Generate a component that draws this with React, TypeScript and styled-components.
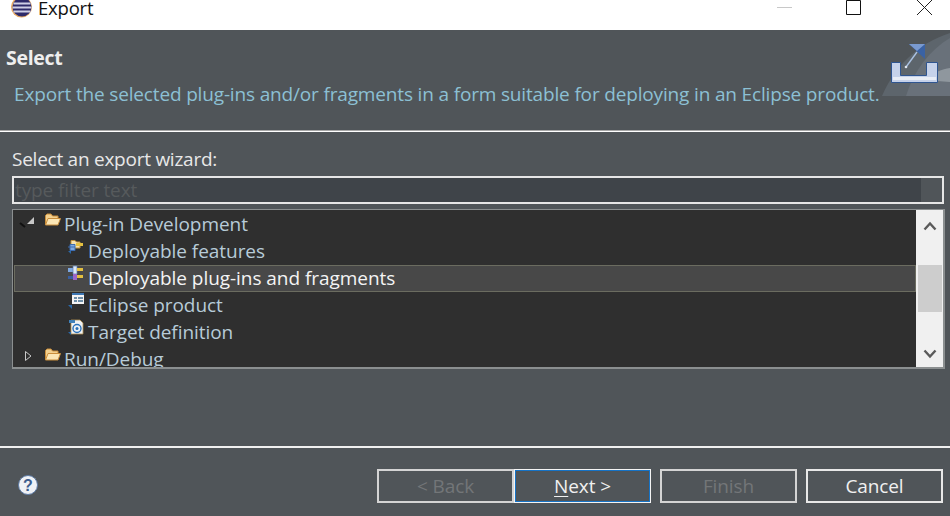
import React from "react";
import styled, { createGlobalStyle } from "styled-components";

const Global = createGlobalStyle`
  html, body { margin: 0; padding: 0; background: #505559; }
  #root { width: 950px; height: 516px; overflow: hidden; }
  * { box-sizing: border-box; }
`;
const FONT = `"Open Sans", "Noto Sans", "Liberation Sans", sans-serif`;

const Dialog = styled.div`
  width: 950px; height: 516px; display: flex; flex-direction: column;
  background: #505559; font-family: ${FONT}; overflow: hidden;
`;
const TitleBar = styled.div`
  height: 30px; flex: none; background: #fff; display: flex; align-items: flex-start;
  padding-left: 11px; position: relative;
`;
const TitleText = styled.span`
  font-size: 18.5px; line-height: 15px; margin-left: 5px; color: #111; letter-spacing: -0.2px;
`;
const WindowButtons = styled.div`
  margin-left: auto; display: flex; align-items: flex-start; height: 16px;
`;
const WinIcon = styled.svg<{ $mr: number; $mt?: number }>`
  display: block; flex: none; margin-right: ${(p) => p.$mr}px; margin-top: ${(p) => p.$mt ?? 0}px;
`;
const Banner = styled.div`
  height: 102px; flex: none; padding: 17px 0 0 6px; position: relative;
  border-bottom: 1px solid #fff; box-shadow: inset 0 -1px 0 #a8a8a8;
`;
const BannerTitle = styled.div`
  font-size: 19.5px; line-height: 22px; font-weight: 700; color: #eee; letter-spacing: -0.3px;
`;
const BannerText = styled.div`
  font-size: 19px; line-height: 26px; color: #8cc0d4; margin: 12px 0 0 8px; white-space: nowrap;
  letter-spacing: -0.16px;
`;
const BannerArt = styled.svg`
  position: absolute; right: 0; top: 0;
`;
const Main = styled.div`
  flex: 1; display: flex; flex-direction: column; padding: 13px 5px 0 12px;
`;
const Label = styled.div`
  font-size: 19px; line-height: 28px; height: 31px; color: #e8e8e8; letter-spacing: -0.25px;
`;
const FilterBox = styled.div`
  height: 28px; width: 932px; border: 2px solid #e6e6e6; background: #505559; padding-right: 21px; flex: none;
`;
const FilterField = styled.div`
  height: 100%; background: #3f4449; color: #565a5c; font-size: 19px; line-height: 24px; padding-left: 1px;
  letter-spacing: -0.1px; overflow: hidden;
`;
const Tree = styled.div`
  margin-top: 5px; height: 160px; width: 933px; flex: none; display: flex;
  border: 1px solid #8b8f90; border-right-width: 2px; border-bottom-width: 2px; background: #2f2f2f; overflow: hidden;
`;
const Rows = styled.div`
  flex: 1; min-width: 0; padding: 1px 0 0 1px; overflow: hidden;
`;
const Row = styled.div<{ $depth: number; $selected?: boolean }>`
  height: 27px; display: flex; align-items: center; position: relative;
  padding: 0 0 2px ${(p) => (p.$depth === 0 ? 5 : 53)}px;
  color: ${(p) => (p.$selected ? "#f4f4f4" : "#b7cbd8")};
  background: ${(p) => (p.$selected ? "#484848" : "transparent")};
  box-shadow: ${(p) => (p.$selected ? "inset 0 0 0 1px #6b6c60" : "none")};
  font-size: 19px; letter-spacing: -0.05px; white-space: nowrap;
`;
const Twist = styled.svg`
  flex: none; margin-right: 5px; margin-top: -5px;
`;
const RowIcon = styled.svg<{ $mr?: number }>`
  flex: none; margin-right: ${(p) => p.$mr ?? 3}px; margin-top: -8px;
`;
const Scrollbar = styled.div`
  width: 27px; flex: none; background: #f0f0f0; display: flex; flex-direction: column; align-items: center;
  padding: 11px 0 0;
`;
const Thumb = styled.div`
  width: 24px; height: 47px; background: #cdcdcd; margin-top: 34px; margin-bottom: 37px; flex: none;
`;
const Footer = styled.div`
  flex: none; height: 70px; border-top: 2px solid #f0f0f0; display: flex; align-items: flex-start;
  padding: 21px 7px 0 18px;
`;
const Help = styled.svg`
  flex: none; margin-top: 6px;
`;
const Buttons = styled.div`
  margin-left: auto; display: flex;
`;
const Button = styled.div<{ $disabled?: boolean; $primary?: boolean; $gap?: number }>`
  width: 137px; height: 34px; display: flex; align-items: center; justify-content: center;
  padding-bottom: 1px;
  margin-left: ${(p) => p.$gap ?? 0}px;
  border: ${(p) => (p.$primary ? "1px solid #f4f4f4" : `2px solid ${p.$disabled ? "#d4d4d4" : "#e8e8e8"}`)};
  box-shadow: ${(p) => (p.$primary ? "inset 0 0 0 1px #1673c6" : "none")};
  color: ${(p) => (p.$disabled ? "#737678" : "#f0f0f0")};
  font-size: 19px; letter-spacing: -0.1px;
`;
const Mnemonic = styled.span`
  text-decoration: underline; text-underline-offset: 3px;
`;

const EclipseIcon = () => (
  <svg width="22" height="18" viewBox="0 0 22 18" style={{ display: "block", flex: "none" }}>
    <circle cx="10.500" cy="7" r="10.500" fill="#e6a860" />
    <circle cx="11" cy="7" r="9.500" fill="#2e2a6a" />
    <path d="M2.500 3.500h17M1.500 7.500h19M2.500 11.500h17" stroke="#cfcfe6" strokeWidth="1.800" />
  </svg>
);

const Folder = () => (
  <RowIcon $mr={2} width="18" height="16" viewBox="0 0 18 16">
    <path d="M1.500 13V3.500L3 2h4l1.500 2H14v2" fill="#f3d08e" stroke="#c98d3a" />
    <path d="M1.500 13 4 6.500h12.500L14 13z" fill="#fbe6b5" stroke="#c98d3a" />
  </RowIcon>
);
const Feature = () => (
  <RowIcon width="18" height="18" viewBox="0 0 18 18">
    <path d="M4 7V2.500h4l1.500 1.500H13v6H4z" fill="#f6e2b0" stroke="#c4953f" />
    <path d="M1 9h7M3 6.500h5v6H3z" fill="#7ea8e0" stroke="#3d6cb0" />
    <path d="M9 5h7v3H9z" fill="#e4c040" />
    <path d="M1 13l3 3v-3z" fill="#2a68a8" />
  </RowIcon>
);
const Plugin = () => (
  <RowIcon width="18" height="18" viewBox="0 0 18 18">
    <path d="M1 3h5v4H1z" fill="#7ea8e0" />
    <path d="M6 1h4v8H6z" fill="#dbe6f4" stroke="#5a7ab0" strokeWidth=".7" />
    <path d="M10 3h6v3h-6z" fill="#e4c040" />
    <path d="M6 9h4v6H6z" fill="#9a66c8" />
    <path d="M10 10h6v3h-6z" fill="#e4c040" />
    <path d="M1 11h5v3H1z" fill="#3a5fa0" />
  </RowIcon>
);
const Product = () => (
  <RowIcon width="18" height="18" viewBox="0 0 18 18">
    <path d="M5 1h12v11H5z" fill="#f4f4f4" />
    <path d="M5 1h12v2H5z" fill="#3e78b4" />
    <path d="M7 5h3v2H7zM11 5h5v2h-5zM7 8h3v2H7zM11 8h5v2h-5z" fill="#6f8fa8" />
    <path d="M1 13h4v4z" fill="#2a68a8" />
  </RowIcon>
);
const Target = () => (
  <RowIcon width="18" height="18" viewBox="0 0 18 18">
    <path d="M4 1h9l3 3v11H4z" fill="#eef2f6" stroke="#b09050" strokeWidth=".8" />
    <path d="M2 1h6v3H2z" fill="#3f7fb8" />
    <circle cx="10" cy="9.500" r="4" fill="none" stroke="#2a70b8" strokeWidth="1.400" />
    <circle cx="10" cy="9.500" r="1.500" fill="#2a70b8" />
    <path d="M1 13l3 3v-3z" fill="#2a68a8" />
  </RowIcon>
);
const Expanded = () => (
  <Twist width="20" height="18" viewBox="0 0 20 18">
    <path d="M8 12 15 5v7z" fill="#c8c8c8" />
    <path d="M1 11l5 4" stroke="#111" strokeWidth="2" />
  </Twist>
);
const Collapsed = () => (
  <Twist width="20" height="18" viewBox="0 0 20 18">
    <path d="M6.500 4.500 12 9l-5.500 4.500z" fill="#2f2f2f" stroke="#c8c8c8" />
  </Twist>
);
const Arrow = ({ up }: { up?: boolean }) => (
  <svg width="14" height="10" viewBox="0 0 14 10" style={{ display: "block", flex: "none" }}>
    <path d={up ? "M1.500 8.500 7 2.500l5.500 6" : "M1.500 1.500 7 7.500l5.500-6"} fill="none" stroke="#5a5a5a" strokeWidth="2.400" />
  </svg>
);

export default function App() {
  return (
    <Dialog>
      <Global />
      <TitleBar>
        <EclipseIcon />
        <TitleText>Export</TitleText>
        <WindowButtons>
          <WinIcon $mr={54} $mt={7} width="15" height="1" viewBox="0 0 15 1">
            <path d="M0 .5h15" stroke="#c8c8c8" />
          </WinIcon>
          <WinIcon $mr={56} width="15" height="16" viewBox="0 0 15 16">
            <path d="M.5 .5h14v14H.5z" fill="none" stroke="#111" />
          </WinIcon>
          <WinIcon $mr={18} width="15" height="16" viewBox="0 0 15 16">
            <path d="M0 0l15 15M15 0 0 15" stroke="#222" />
          </WinIcon>
        </WindowButtons>
      </TitleBar>
      <Banner>
        <BannerTitle>Select</BannerTitle>
        <BannerText>Export the selected plug-ins and/or fragments in a form suitable for deploying in an Eclipse product.</BannerText>
        <BannerArt width="70" height="66" viewBox="0 0 70 66">
          <path d="M2 66C14 38 36 14 70 3v63z" fill="#5d656c" />
          <path d="M26 66C34 40 50 20 70 8v58z" fill="#69717a" />
          <path d="M44 50C54 42 62 39 70 38v14z" fill="#8f979e" />
          <path d="M11.500 32.500h9v13h26v-13h11v20h-46z" fill="#c6d2ea" stroke="#2f5590" />
          <path d="M13 47h43v3H13z" fill="#e8edf6" />
          <path d="M26 37 37 22" stroke="#a9c0e0" strokeWidth="1.400" />
          <circle cx="26" cy="37" r="1.300" fill="#dfe6f0" />
          <path d="M29 14h16v15z" fill="#3a62a4" />
          <path d="M29 14h16L37 21z" fill="#7a9ad0" />
        </BannerArt>
      </Banner>
      <Main>
        <Label>Select an export wizard:</Label>
        <FilterBox>
          <FilterField>type filter text</FilterField>
        </FilterBox>
        <Tree>
          <Rows>
            <Row $depth={0}><Expanded /><Folder />Plug-in Development</Row>
            <Row $depth={1}><Feature />Deployable features</Row>
            <Row $depth={1} $selected><Plugin />Deployable plug-ins and fragments</Row>
            <Row $depth={1}><Product />Eclipse product</Row>
            <Row $depth={1}><Target />Target definition</Row>
            <Row $depth={0}><Collapsed /><Folder />Run/Debug</Row>
          </Rows>
          <Scrollbar>
            <Arrow up />
            <Thumb />
            <Arrow />
          </Scrollbar>
        </Tree>
      </Main>
      <Footer>
        <Help width="20" height="20" viewBox="0 0 20 20">
          <circle cx="10" cy="10" r="9.500" fill="#eef1f6" stroke="#5d7ba6" />
          <text x="10" y="16" textAnchor="middle" fontSize="16" fontWeight="700" fill="#3d5d8e" fontFamily="Liberation Sans, sans-serif">?</text>
        </Help>
        <Buttons>
          <Button $disabled>&lt; Back</Button>
          <Button $primary><span><Mnemonic>N</Mnemonic>ext &gt;</span></Button>
          <Button $disabled $gap={9}>Finish</Button>
          <Button $gap={9}>Cancel</Button>
        </Buttons>
      </Footer>
    </Dialog>
  );
}
